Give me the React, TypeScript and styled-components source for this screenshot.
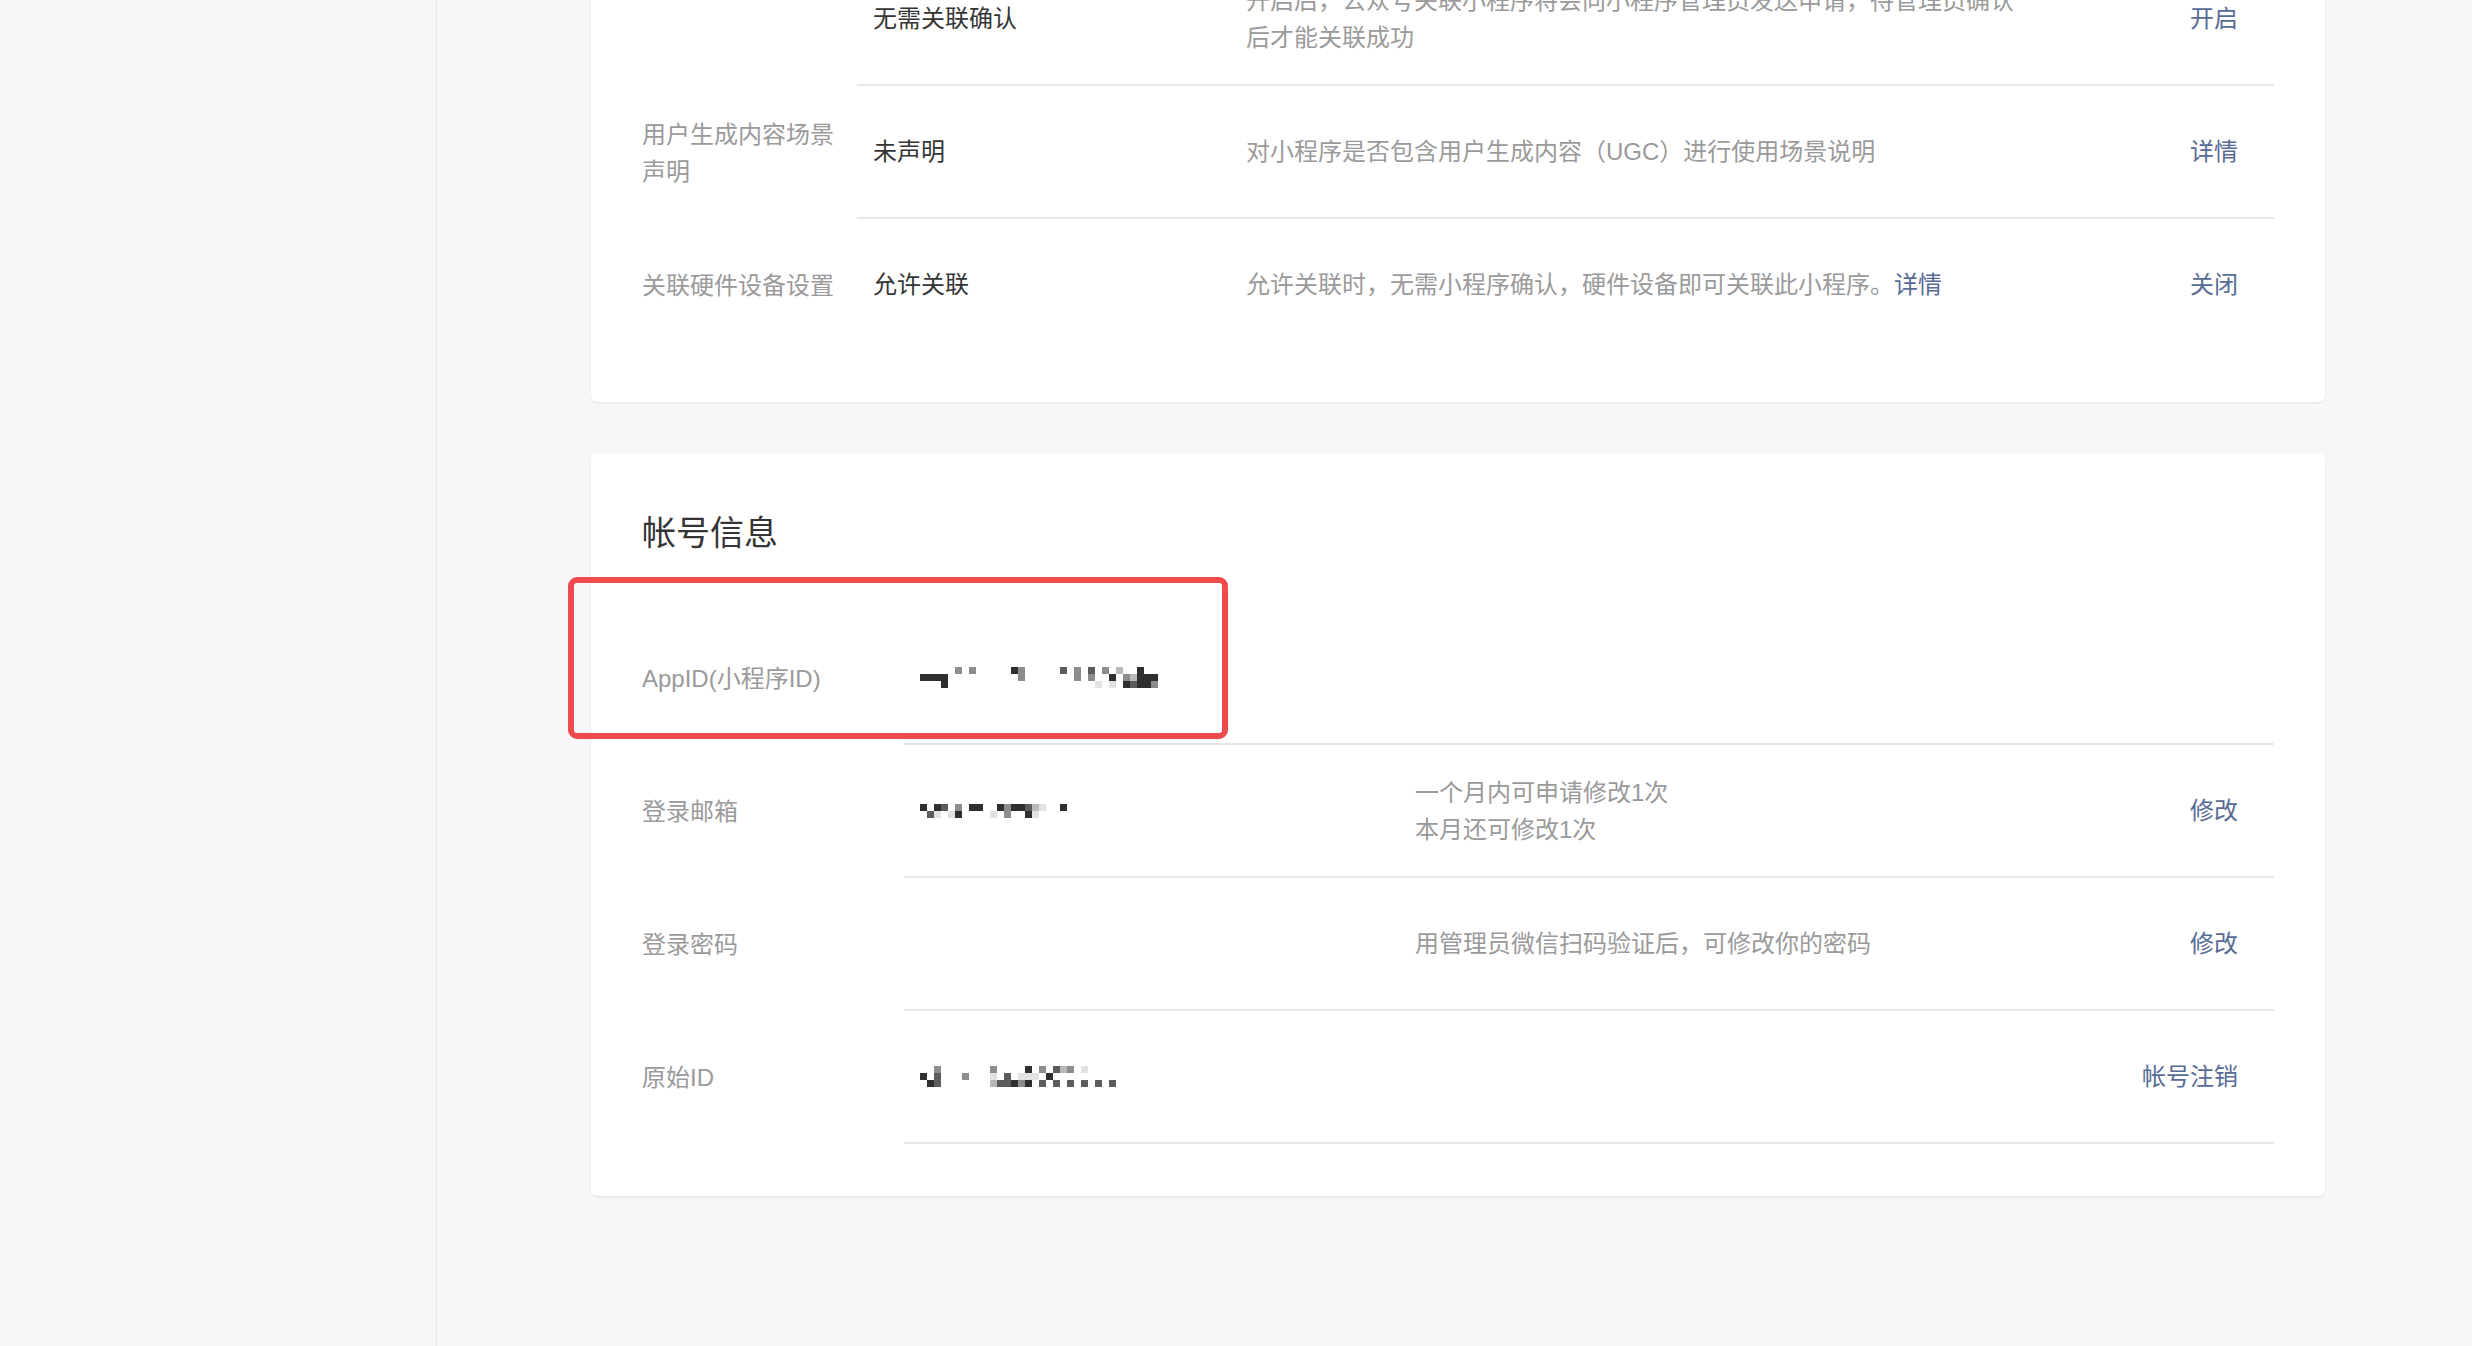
import React from "react";
import styled, { createGlobalStyle } from "styled-components";

const Global = createGlobalStyle`
  html, body { margin: 0; padding: 0; background: #f6f7f9; }
  body {
    font-family: "Liberation Sans", "Noto Sans CJK SC", sans-serif;
    -webkit-font-smoothing: antialiased;
  }
  * { box-sizing: border-box; }
`;

const Page = styled.div`
  display: flex;
  height: 1346px;
  overflow: hidden;
  background: #f6f7f9;
`;

const Sidebar = styled.aside`
  width: 437px;
  flex: none;
  border-right: 1px solid #e6e8eb;
`;

const Main = styled.main`
  flex: 1;
  padding-left: 154px;
  overflow: hidden;
`;

const Stack = styled.div`
  width: 1734px;
  margin-top: -47px;
  display: flex;
  flex-direction: column;
  gap: 51px;
`;

const Card = styled.section<{ $pt: number; $pb: number }>`
  background: #fff;
  border-radius: 6px;
  box-shadow: 0 1px 2px rgba(0, 0, 0, 0.09);
  padding: ${(p) => p.$pt}px 51px ${(p) => p.$pb}px;
`;

const Title = styled.h2`
  margin: 0 0 55px;
  font-size: 34px;
  line-height: 48px;
  font-weight: 400;
  color: #353535;
`;

const Row = styled.div`
  display: flex;
  position: relative;
`;

const Label = styled.div<{ $w: number }>`
  width: ${(p) => p.$w}px;
  flex: none;
  display: flex;
  align-items: center;
  padding-right: 8px;
  font-size: 24px;
  line-height: 37px;
  color: #9a9a9a;
`;

const Body = styled.div<{ $noLine?: boolean }>`
  flex: 1;
  display: flex;
  align-items: center;
  min-height: 133px;
  padding: 0 36px 0 16px;
  border-bottom: 2px solid ${(p) => (p.$noLine ? "transparent" : "#e7e7eb")};
`;

const Value = styled.div<{ $w: number }>`
  width: ${(p) => p.$w}px;
  flex: none;
  display: flex;
  align-items: center;
  font-size: 24px;
  line-height: 37px;
  color: #353535;
`;

const Desc = styled.div`
  flex: 1;
  max-width: 780px;
  font-size: 24px;
  line-height: 37px;
  color: #9a9a9a;
`;

const Link = styled.a`
  color: #576b95;
  text-decoration: none;
  cursor: pointer;
`;

const Action = styled(Link)`
  margin-left: auto;
  flex: none;
  font-size: 24px;
  line-height: 37px;
`;

const Highlight = styled.div`
  position: absolute;
  left: -74px;
  top: -35px;
  width: 660px;
  height: 162px;
  border: 6px solid #ef4a4c;
  border-radius: 9px;
  pointer-events: none;
`;

const shades: Record<string, string> = {
  "1": "#e2e2e2",
  "2": "#b8b8b8",
  "3": "#8c8c8c",
  "4": "#5c5c5c",
  "5": "#2f2f2f",
};

const Mosaic = ({ rows }: { rows: string[] }) => {
  const cell = 7;
  const w = rows[0].length * cell;
  const h = rows.length * cell;
  return (
    <svg width={w} height={h} viewBox={`0 0 ${w} ${h}`} shapeRendering="crispEdges">
      {rows.flatMap((r, y) =>
        r.split("").map((c, x) =>
          c === "." ? null : (
            <rect key={`${x}-${y}`} x={x * cell} y={y * cell} width={cell} height={cell} fill={shades[c]} />
          )
        )
      )}
    </svg>
  );
};

const appIdMosaic = [
  ".....3.3.....53.....4.3.4.3.2..5..",
  "5555..........3.......3.3..5.32555",
  "...5.....................1.1.54553",
];

const emailMosaic = [
  "5.54.3.55..5355421..5",
  ".41.15....1.3..51....",
];

const originMosaic = [
  "..3.......3....5.3.423.1....",
  "5.4...3...1.4.111.5.........",
  ".54.......244535.4.4.4.4.4.4",
];

export default function App() {
  return (
    <>
      <Global />
      <Page>
        <Sidebar />
        <Main>
          <Stack>
            <Card $pt={0} $pb={50}>
              <Row>
                <Label $w={215} />
                <Body>
                  <Value $w={373}>无需关联确认</Value>
                  <Desc>开启后，公众号关联小程序将会向小程序管理员发送申请，待管理员确认后才能关联成功</Desc>
                  <Action>开启</Action>
                </Body>
              </Row>
              <Row>
                <Label $w={215}>用户生成内容场景声明</Label>
                <Body>
                  <Value $w={373}>未声明</Value>
                  <Desc>对小程序是否包含用户生成内容（UGC）进行使用场景说明</Desc>
                  <Action>详情</Action>
                </Body>
              </Row>
              <Row>
                <Label $w={215}>关联硬件设备设置</Label>
                <Body $noLine>
                  <Value $w={373}>允许关联</Value>
                  <Desc>
                    允许关联时，无需小程序确认，硬件设备即可关联此小程序。<Link>详情</Link>
                  </Desc>
                  <Action>关闭</Action>
                </Body>
              </Row>
            </Card>

            <Card $pt={56} $pb={52}>
              <Title>帐号信息</Title>
              <Row>
                <Label $w={262}>AppID(小程序ID)</Label>
                <Body>
                  <Value $w={495}>
                    <Mosaic rows={appIdMosaic} />
                  </Value>
                </Body>
                <Highlight />
              </Row>
              <Row>
                <Label $w={262}>登录邮箱</Label>
                <Body>
                  <Value $w={495}>
                    <Mosaic rows={emailMosaic} />
                  </Value>
                  <Desc>
                    一个月内可申请修改1次
                    <br />
                    本月还可修改1次
                  </Desc>
                  <Action>修改</Action>
                </Body>
              </Row>
              <Row>
                <Label $w={262}>登录密码</Label>
                <Body>
                  <Value $w={495} />
                  <Desc>用管理员微信扫码验证后，可修改你的密码</Desc>
                  <Action>修改</Action>
                </Body>
              </Row>
              <Row>
                <Label $w={262}>原始ID</Label>
                <Body>
                  <Value $w={495}>
                    <Mosaic rows={originMosaic} />
                  </Value>
                  <Action>帐号注销</Action>
                </Body>
              </Row>
            </Card>
          </Stack>
        </Main>
      </Page>
    </>
  );
}
